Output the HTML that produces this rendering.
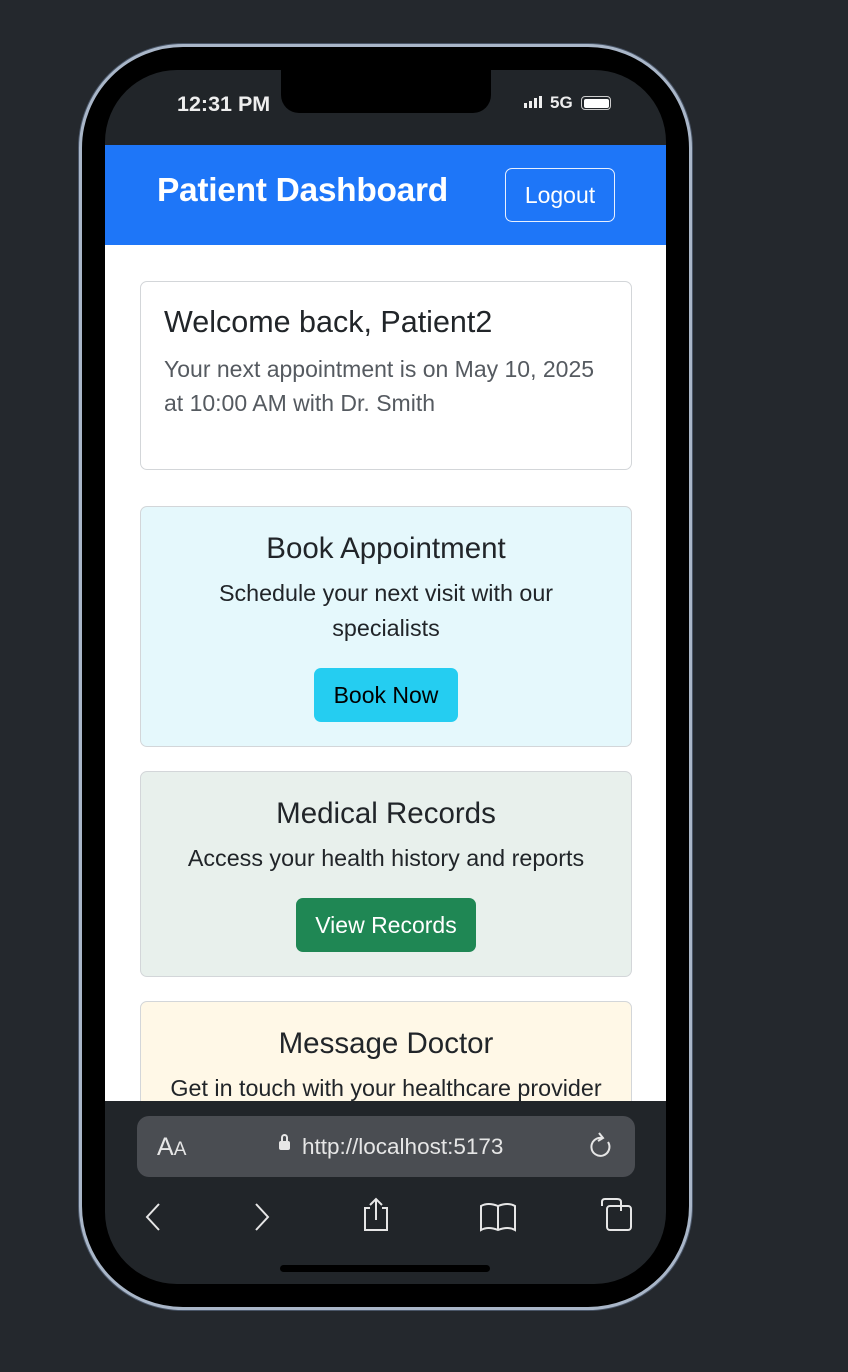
<!DOCTYPE html>
<html><head><style>
*{box-sizing:border-box;margin:0;padding:0}
body{width:848px;height:1372px;background:#24282d;font-family:"Liberation Sans",sans-serif;position:relative;overflow:hidden}
.frame{position:absolute;left:79px;top:44px;width:613px;height:1266px;border-radius:104px;border:3px solid #a9b6c8;background:#000;box-shadow:0 0 0 1px #4a5668}
.screen{position:absolute;left:105px;top:70px;width:561px;height:1214px;border-radius:72px;background:#212529;overflow:hidden}
.notch{position:absolute;left:176px;top:0;width:210px;height:43px;background:#000;border-radius:0 0 18px 18px}
.abs{position:absolute}
.hdr{position:absolute;left:0;top:75px;width:561px;height:100px;background:#1e76f8}
.content{position:absolute;left:0;top:175px;width:561px;height:856px;background:#fff;overflow:hidden}
.card{position:absolute;left:35px;width:492px;border:1.5px solid #d3d6d9;border-radius:7px;text-align:center;color:#212529}
.card h3{font-weight:normal;font-size:29.5px;line-height:36px}
.card p{font-size:23.3px;line-height:35px;white-space:nowrap}
.btn{position:absolute;border-radius:7px;font-size:23px;line-height:54px}
</style></head><body>
<div class="frame"></div>
<div class="screen">
 <div class="notch"></div>
 <div class="abs" style="left:72px;top:22px;color:#eee;font-size:21.5px;font-weight:bold">12:31 PM</div>
 <div class="abs" style="left:419px;top:26px;width:20px;height:12px">
  <div class="abs" style="left:0;top:7px;width:3px;height:5px;background:#eee"></div>
  <div class="abs" style="left:5px;top:5px;width:3px;height:7px;background:#eee"></div>
  <div class="abs" style="left:10px;top:2px;width:3px;height:10px;background:#eee"></div>
  <div class="abs" style="left:15px;top:0;width:3px;height:12px;background:#eee"></div>
 </div>
 <div class="abs" style="left:445px;top:23px;color:#eee;font-size:17px;font-weight:bold">5G</div>
 <div class="abs" style="left:476px;top:26px;width:30px;height:14px;border:1.5px solid #ccc;border-radius:4px;padding:1.5px"><div style="width:100%;height:100%;background:#fff;border-radius:2px"></div></div>
 <div class="hdr">
  <div class="abs" style="left:52px;top:27px;color:#fff;font-size:33.5px;font-weight:bold;letter-spacing:-0.3px">Patient Dashboard</div>
  <div class="abs" style="left:400px;top:23px;width:110px;height:54px;border:1.5px solid #e8f0ff;border-radius:7px;color:#fff;font-size:23px;line-height:52px;text-align:center">Logout</div>
 </div>
 <div class="content">
  <div class="card" style="top:36px;height:189px;text-align:left;padding:22px 23px">
   <h3 style="font-size:30.5px;margin-bottom:12px">Welcome back, Patient2</h3>
   <p style="color:#555a60;line-height:34px;white-space:normal;font-size:23px">Your next appointment is on May 10, 2025<br>at 10:00 AM with Dr. Smith</p>
  </div>
  <div class="card" style="top:261px;height:241px;background:#e5f8fc;padding-top:24px">
   <h3>Book Appointment</h3>
   <p style="margin-top:9px">Schedule your next visit with our<br>specialists</p>
   <div class="btn" style="left:173px;top:161px;width:144px;background:#25cdf1;color:#000">Book Now</div>
  </div>
  <div class="card" style="top:526px;height:206px;background:#e8f0ec;padding-top:24px">
   <h3>Medical Records</h3>
   <p style="margin-top:9px">Access your health history and reports</p>
   <div class="btn" style="left:155px;top:126px;width:180px;background:#1f8754;color:#fff">View Records</div>
  </div>
  <div class="card" style="top:756px;height:200px;background:#fff8e7;padding-top:24px">
   <h3>Message Doctor</h3>
   <p style="margin-top:9px">Get in touch with your healthcare provider</p>
  </div>
 </div>
 <div class="abs" style="left:32px;top:1046px;width:498px;height:61px;background:#4a4d52;border-radius:12px;color:#e6e6e6">
  <div class="abs" style="left:20px;top:17px;font-size:25px">A<span style="font-size:19px">A</span></div>
  <div class="abs" style="left:142px;top:25px;width:11px;height:9px;background:#e6e6e6;border-radius:2px"></div>
  <div class="abs" style="left:144px;top:18px;width:7px;height:9px;border:2px solid #e6e6e6;border-bottom:none;border-radius:4px 4px 0 0"></div>
  <div class="abs" style="left:165px;top:18px;font-size:22.5px">http://localhost:5173</div>
  <svg class="abs" style="left:450px;top:16px" width="26" height="30" viewBox="0 0 26 30"><path d="M15 6 A9 9 0 1 0 21 10" fill="none" stroke="#e6e6e6" stroke-width="2"/><path d="M12 1 L16 6 L11 9" fill="none" stroke="#e6e6e6" stroke-width="2"/></svg>
 </div>
 <svg class="abs" style="left:0;top:1120px" width="561" height="50" viewBox="0 0 561 50" fill="none" stroke="#e6e6e6" stroke-width="2">
  <path d="M54 14 L42 27 L54 40"/>
  <path d="M151 14 L163 27 L151 40"/>
  <path d="M265 18 H260 V40 H282 V18 H277 M271 9 V30 M265 15 L271 9 L277 15"/>
  <path d="M393 40 V16 Q383 12 376 16 V40 Q383 36 393 40 Q403 36 410 40 V16 Q403 12 393 16"/>
  <path d="M497 16 V12 Q497 9 500 9 H512 Q516 9 516 12 V21"/><rect x="502" y="16" width="24" height="24" rx="3"/>
 </svg>
 <div class="abs" style="left:175px;top:1195px;width:210px;height:7px;background:#000;border-radius:4px"></div>
</div>
</body></html>
